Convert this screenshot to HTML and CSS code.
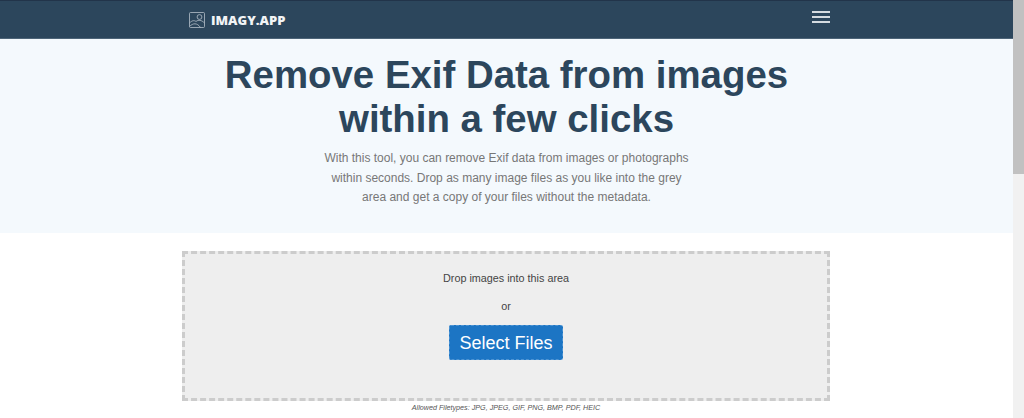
FILE: index.html
```html
<!DOCTYPE html>
<html lang="en">
<head>
    <meta charset="UTF-8">
    <meta name="viewport" content="width=device-width, initial-scale=1.0">
    <title>Remove Exif Data from images</title>
    <link rel="stylesheet" href="styles.css">
</head>
<body>
    <div class="page">
        <nav class="navbar">
            <div class="nav-inner">
                <a class="brand" href="#">
                    <svg class="brand-icon" viewBox="0 0 16 16" fill="none" stroke="currentColor" stroke-width="0.8">
                        <rect x="0.5" y="0.5" width="15" height="15" rx="1"/>
                        <circle cx="10.5" cy="5" r="2.4"/>
                        <path d="M0.5 11 C3 8.5 5 8 7 9.5 C9.5 7.5 12.5 8 15.5 11"/>
                        <path d="M0.5 14.5 C4 11 8 10.5 11.5 15.5"/>
                    </svg>
                    <span>IMAGY.APP</span>
                </a>
                <div class="burger">
                    <span></span>
                    <span></span>
                    <span></span>
                </div>
            </div>
        </nav>

        <section class="hero">
            <h1>Remove Exif Data from images<br>within a few clicks</h1>
            <p>With this tool, you can remove Exif data from images or photographs<br>within seconds. Drop as many image files as you like into the grey<br>area and get a copy of your files without the metadata.</p>
        </section>

        <section class="upload">
            <div class="dropzone">
                <div class="drop-text">Drop images into this area</div>
                <div class="drop-or">or</div>
                <button class="select-btn">Select Files</button>
            </div>
            <div class="filetypes">Allowed Filetypes: JPG, JPEG, GIF, PNG, BMP, PDF, HEIC</div>
        </section>
    </div>

    <div class="scrollbar">
        <div class="scrollbar-thumb"></div>
    </div>
</body>
</html>
```

FILE: styles.css
```css
* {
    margin: 0;
    padding: 0;
    box-sizing: border-box;
}

html,
body {
    height: 100%;
    overflow: hidden;
}

body {
    display: flex;
    background: #fff;
    font-family: "Liberation Sans", Arial, sans-serif;
    color: #444;
}

.page {
    flex: 1;
    min-width: 0;
}

.scrollbar {
    width: 11px;
    background: #f1f1f1;
}

.scrollbar-thumb {
    height: 174px;
    background: #c1c1c1;
}

.navbar {
    height: 39px;
    background: #2c465c;
    border-top: 1px solid #22344a;
    border-bottom: 1px solid #4d6478;
}

.nav-inner {
    width: 648px;
    height: 100%;
    margin-left: 182px;
    padding: 0 0 0 7px;
    display: flex;
    align-items: center;
    justify-content: space-between;
}

.brand {
    display: flex;
    align-items: center;
    gap: 6px;
    color: #f2f4f6;
    text-decoration: none;
    font-family: "Open Sans", sans-serif;
    font-weight: 800;
    font-size: 13px;
}

.brand-icon {
    width: 16px;
    height: 16px;
    color: #b4bfc9;
}

.burger {
    width: 18px;
    display: flex;
    flex-direction: column;
    gap: 3.5px;
    margin-top: -5px;
}

.burger span {
    display: block;
    height: 1.5px;
    background: #d5dbe0;
}

.hero {
    height: 194px;
    background: #f4f9fd;
    text-align: center;
    padding-top: 14px;
}

.hero h1 {
    color: #2c465c;
    font-size: 38.4px;
    line-height: 44px;
    font-weight: 700;
}

.hero p {
    margin-top: 8px;
    color: #777;
    font-size: 12px;
    line-height: 19.5px;
}

.upload {
    padding-top: 18px;
}

.dropzone {
    width: 648px;
    height: 150px;
    margin-left: 182px;
    background: #eee;
    border: 3px dashed #ccc;
    text-align: center;
    font-size: 10.8px;
    padding-top: 17px;
}

.drop-text {
    line-height: 14px;
}

.drop-or {
    margin-top: 14px;
    line-height: 14px;
}

.select-btn {
    display: block;
    width: 114px;
    height: 35px;
    margin: 12px auto 0;
    padding-top: 2px;
    background: #1c75c4;
    border: 1px dashed #4d94d4;
    border-radius: 2px;
    color: #fff;
    font-family: inherit;
    font-size: 18px;
}

.filetypes {
    margin-left: 182px;
    width: 648px;
    margin-top: 1px;
    text-align: center;
    font-size: 7.2px;
    font-style: italic;
    line-height: 12px;
    color: #555;
}
```
